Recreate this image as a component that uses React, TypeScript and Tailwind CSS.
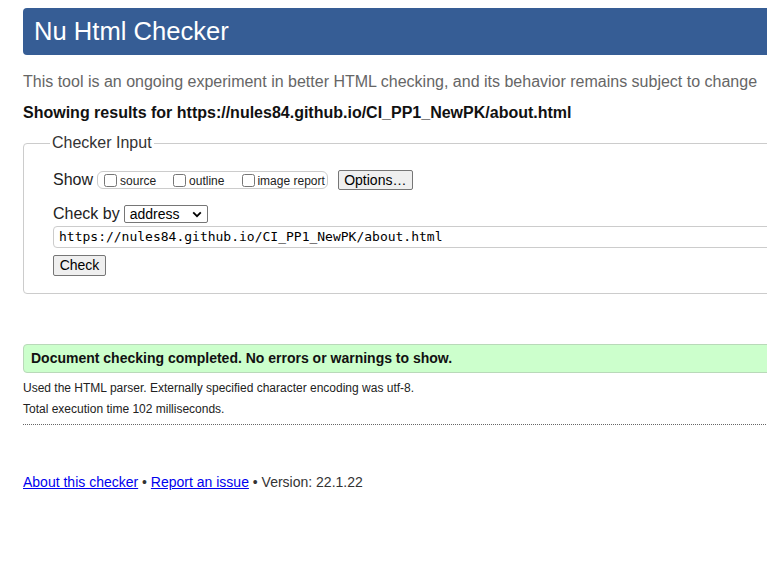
import React from "react";

export default function App() {
  return (
    <div
      className="w-[767px] h-[571px] overflow-hidden bg-white"
      style={{ fontFamily: '"Liberation Sans", Arial, sans-serif' }}
    >
      <div className="w-[800px] pl-[23px] pt-[8px]">
        {/* Header */}
        <div className="h-[47px] bg-[#365d95] rounded-[4px] flex items-center pl-[11px]">
          <h1 className="text-[25.6px] text-white font-normal leading-none">Nu Html Checker</h1>
        </div>

        <p className="mt-[17px] text-[16px] leading-[20px] text-[#666] whitespace-nowrap">
          This tool is an ongoing experiment in better HTML checking, and its behavior remains subject to change
        </p>
        <p className="mt-[11px] text-[16px] leading-[20px] font-bold text-[#111] whitespace-nowrap">
          Showing results for https://nules84.github.io/CI_PP1_NewPK/about.html
        </p>

        {/* Checker Input fieldset */}
        <fieldset className="mt-[8px] border border-[#cccccc] rounded-[4px] pl-[26px] pt-[15px] pb-[17px]">
          <legend className="px-[2px] text-[16px] text-[#333]">Checker Input</legend>
          <div className="pl-[3px] flex flex-col">
            <div className="h-[20px] flex items-center">
              <span className="text-[16px] text-[#222]">Show</span>
              <div className="ml-[4px] h-[18px] flex items-center border border-[#cccccc] rounded-[6px] pl-[6px] pr-[2px]">
                <label className="flex items-center">
                  <input type="checkbox" className="m-0 w-[13px] h-[13px]" />
                  <span className="ml-[3px] mt-[2px] text-[12px] text-[#222]">source</span>
                </label>
                <label className="flex items-center ml-[17px]">
                  <input type="checkbox" className="m-0 w-[13px] h-[13px]" />
                  <span className="ml-[3px] mt-[2px] text-[12px] text-[#222]">outline</span>
                </label>
                <label className="flex items-center ml-[18px]">
                  <input type="checkbox" className="m-0 w-[13px] h-[13px]" />
                  <span className="ml-[2px] mt-[2px] text-[12px] text-[#222]">image report</span>
                </label>
              </div>
              <button className="ml-[10px] w-[75px] h-[20px] border border-[#767676] rounded-[2px] bg-[#efefef] text-[14px] text-black flex items-center justify-center">
                Options…
              </button>
            </div>

            <div className="mt-[15px] h-[18px] flex items-center">
              <span className="text-[16px] text-[#222]">Check by</span>
              <div className="ml-[4px] w-[84px] h-[18px] border border-[#767676] rounded-[2px] bg-white flex items-center pl-[5px] pr-[4px]">
                <span className="text-[14px] text-black flex-1 leading-none">address</span>
                <svg width="10" height="7" viewBox="0 0 10 7" className="mr-[1px]">
                  <path d="M1.2 1.4 L5 5.2 L8.8 1.4" fill="none" stroke="#000" strokeWidth="1.8" />
                </svg>
              </div>
            </div>

            <div className="mt-[3px] h-[22px] border border-[#cccccc] rounded-[4px] flex items-center pl-[5px]">
              <span
                className="text-[13px] text-black whitespace-nowrap"
                style={{ fontFamily: '"DejaVu Sans Mono", "Liberation Mono", monospace' }}
              >
                https://nules84.github.io/CI_PP1_NewPK/about.html
              </span>
            </div>

            <div className="mt-[7px]">
              <button className="w-[53px] h-[21px] border border-[#767676] rounded-[2px] bg-[#efefef] text-[14px] text-black flex items-center justify-center">
                Check
              </button>
            </div>
          </div>
        </fieldset>

        {/* Result */}
        <div className="mt-[50px] h-[29px] bg-[#ccffcc] border border-[#b9d9b9] rounded-[4px] flex items-center pl-[7px]">
          <p className="text-[14px] font-bold text-[#111]">Document checking completed. No errors or warnings to show.</p>
        </div>

        <p className="mt-[5px] text-[12px] leading-[20px] text-[#222]">
          Used the HTML parser. Externally specified character encoding was utf-8.
        </p>
        <p className="mt-[1px] text-[12px] leading-[20px] text-[#222]">Total execution time 102 milliseconds.</p>

        <div className="mt-[5px] border-b border-dotted border-[#666]" />

        <p className="mt-[47px] text-[14px] text-[#333]">
          <a className="text-[#0000ee] underline">About this checker</a>
          {" • "}
          <a className="text-[#0000ee] underline">Report an issue</a>
          {" • Version: 22.1.22"}
        </p>
      </div>
    </div>
  );
}
